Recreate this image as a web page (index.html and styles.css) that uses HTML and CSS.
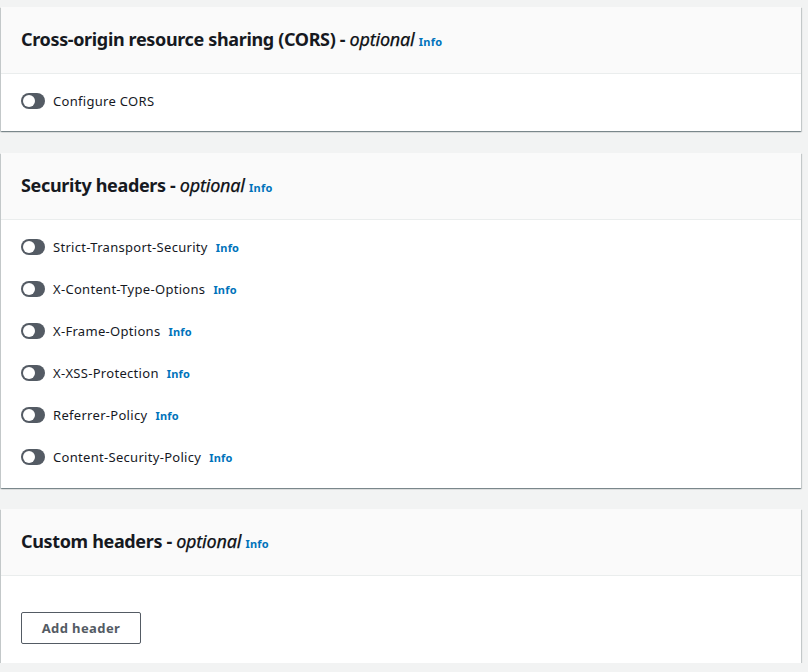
FILE: index.html
```html
<!DOCTYPE html>
<html>
<head>
<meta charset="utf-8">
<link rel="stylesheet" href="styles.css">
</head>
<body>
<div class="page">
  <section class="card">
    <div class="card-header">
      <h2 class="title">Cross-origin resource sharing (CORS) - <em>optional</em> <a class="info">Info</a></h2>
    </div>
    <div class="card-body single">
      <div class="row"><span class="toggle"><span class="knob"></span></span><span class="label">Configure CORS</span></div>
    </div>
  </section>
  <section class="card">
    <div class="card-header">
      <h2 class="title">Security headers - <em>optional</em> <a class="info">Info</a></h2>
    </div>
    <div class="card-body list">
      <div class="row"><span class="toggle"><span class="knob"></span></span><span class="label">Strict-Transport-Security</span><a class="info small">Info</a></div>
      <div class="row"><span class="toggle"><span class="knob"></span></span><span class="label">X-Content-Type-Options</span><a class="info small">Info</a></div>
      <div class="row"><span class="toggle"><span class="knob"></span></span><span class="label">X-Frame-Options</span><a class="info small">Info</a></div>
      <div class="row"><span class="toggle"><span class="knob"></span></span><span class="label">X-XSS-Protection</span><a class="info small">Info</a></div>
      <div class="row"><span class="toggle"><span class="knob"></span></span><span class="label">Referrer-Policy</span><a class="info small">Info</a></div>
      <div class="row"><span class="toggle"><span class="knob"></span></span><span class="label">Content-Security-Policy</span><a class="info small">Info</a></div>
    </div>
  </section>
  <section class="card last">
    <div class="card-header">
      <h2 class="title">Custom headers - <em>optional</em> <a class="info">Info</a></h2>
    </div>
    <div class="card-body custom">
      <button class="btn">Add header</button>
    </div>
  </section>
</div>
</body>
</html>
```
FILE: styles.css
```css
html, body {
  margin: 0;
  padding: 0;
  background: #f2f3f3;
  font-family: "Noto Sans", "Open Sans", sans-serif;
  color: #16191f;
}
.page {
  padding: 7px 7px 0 1px;
  display: flex;
  flex-direction: column;
  gap: 22px;
}
.card {
  background: #fff;
  box-shadow: 0 1px 1px 0 rgba(0,28,36,.3), 1px 1px 1px 0 rgba(0,28,36,.15), -1px 1px 1px 0 rgba(0,28,36,.15);
}
.card.last {
  margin-top: -1px;
}
.card-header {
  background: #fafafa;
  border-bottom: 1px solid #eaeded;
  height: 67px;
  box-sizing: border-box;
  padding: 0 20px;
  display: flex;
  align-items: center;
}
.title {
  margin: 0;
  font-size: 18px;
  line-height: 22px;
  font-weight: 700;
  letter-spacing: -0.35px;
}
.title em {
  font-style: italic;
  font-weight: 400;
  letter-spacing: -0.2px;
  color: #0d1015;
  -webkit-text-stroke: 0.25px #0d1015;
}
.info {
  color: #0073bb;
  font-size: 11px;
  font-weight: 700;
  letter-spacing: 0.2px;
}
.card-body {
  padding: 20px;
}
.single {
  padding: 18px 20px 22px;
}
.list {
  padding: 16px 20px 20px;
  display: flex;
  flex-direction: column;
  gap: 20px;
}
.row {
  display: flex;
  align-items: center;
  height: 17px;
}
.list .row { height: 22px; }
.toggle {
  width: 24px;
  height: 16px;
  border-radius: 8px;
  background: #545b64;
  position: relative;
  flex: none;
}
.knob {
  position: absolute;
  left: 2px;
  top: 2px;
  width: 12px;
  height: 12px;
  border-radius: 50%;
  background: #fff;
}
.label {
  margin-left: 8px;
  font-size: 13px;
  letter-spacing: 0.3px;
  color: #16191f;
}
.info.small {
  margin-left: 8px;
}
.custom {
  padding: 36px 20px 19px;
}
.btn {
  display: block;
  width: 120px;
  height: 32px;
  background: #fff;
  border: 1px solid #545b64;
  border-radius: 2px;
  color: #545b64;
  font-family: "Noto Sans", "Open Sans", sans-serif;
  font-size: 13px;
  font-weight: 700;
  letter-spacing: 0.4px;
  padding: 0;
}
```
